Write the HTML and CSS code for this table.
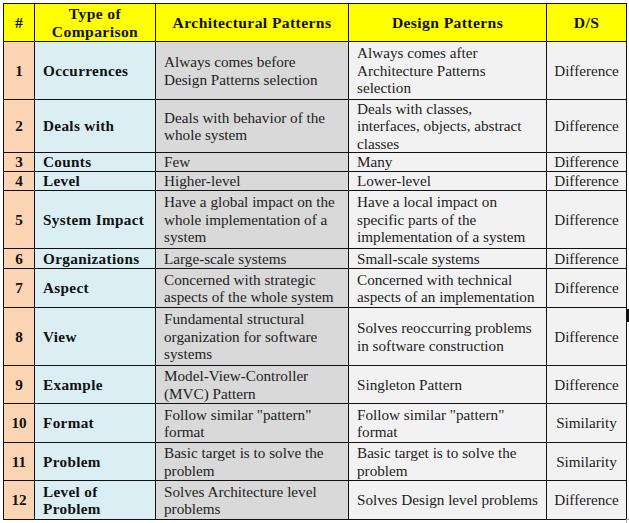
FILE: index.html
```html
<!DOCTYPE html>
<html>
<head>
<meta charset="utf-8">
<link rel="stylesheet" href="styles.css">
</head>
<body>
<div class="page">
<div class="grid">
  <div class="c h">#</div><div class="c h">Type of<br>Comparison</div><div class="c h">Architectural Patterns</div><div class="c h">Design Patterns</div><div class="c h">D/S</div>

  <div class="c n">1</div><div class="c t">Occurrences</div><div class="c a">Always comes before<br>Design Patterns selection</div><div class="c d">Always comes after<br>Architecture Patterns<br>selection</div><div class="c s">Difference</div>

  <div class="c n">2</div><div class="c t">Deals with</div><div class="c a">Deals with behavior of the<br>whole system</div><div class="c d">Deals with classes,<br>interfaces, objects, abstract<br>classes</div><div class="c s">Difference</div>

  <div class="c n">3</div><div class="c t">Counts</div><div class="c a">Few</div><div class="c d">Many</div><div class="c s">Difference</div>

  <div class="c n">4</div><div class="c t">Level</div><div class="c a">Higher-level</div><div class="c d">Lower-level</div><div class="c s">Difference</div>

  <div class="c n">5</div><div class="c t">System Impact</div><div class="c a">Have a global impact on the<br>whole implementation of a<br>system</div><div class="c d">Have a local impact on<br>specific parts of the<br>implementation of a system</div><div class="c s">Difference</div>

  <div class="c n">6</div><div class="c t">Organizations</div><div class="c a">Large-scale systems</div><div class="c d">Small-scale systems</div><div class="c s">Difference</div>

  <div class="c n">7</div><div class="c t">Aspect</div><div class="c a">Concerned with strategic<br>aspects of the whole system</div><div class="c d">Concerned with technical<br>aspects of an implementation</div><div class="c s">Difference</div>

  <div class="c n">8</div><div class="c t">View</div><div class="c a">Fundamental structural<br>organization for software<br>systems</div><div class="c d">Solves reoccurring problems<br>in software construction</div><div class="c s">Difference</div>

  <div class="c n">9</div><div class="c t">Example</div><div class="c a">Model-View-Controller<br>(MVC) Pattern</div><div class="c d">Singleton Pattern</div><div class="c s">Difference</div>

  <div class="c n">10</div><div class="c t">Format</div><div class="c a">Follow similar "pattern"<br>format</div><div class="c d">Follow similar "pattern"<br>format</div><div class="c s">Similarity</div>

  <div class="c n">11</div><div class="c t">Problem</div><div class="c a">Basic target is to solve the<br>problem</div><div class="c d">Basic target is to solve the<br>problem</div><div class="c s">Similarity</div>

  <div class="c n">12</div><div class="c t">Level of<br>Problem</div><div class="c a">Solves Architecture level<br>problems</div><div class="c d">Solves Design level problems</div><div class="c s">Difference</div>
</div>
<div class="mark"></div>
<div class="corner"></div>
</div>
</body>
</html>
```

FILE: styles.css
```css
html, body {
  margin: 0;
  padding: 0;
  background: #ffffff;
}

.page {
  position: relative;
  width: 629px;
  height: 523px;
  overflow: hidden;
}

.grid {
  margin: 3px 0 0 3px;
  display: grid;
  grid-template-columns: 31px 121px 193px 198px 80px;
  grid-template-rows: 38px 58px 53px 19px 19px 58px 20px 39px 58px 38px 39px 38px 39px;
  width: 623px;
  border-left: 1px solid #111;
  border-top: 1px solid #111;
  font-family: "Liberation Serif", "Times New Roman", serif;
  font-size: 15.2px;
  line-height: 17.5px;
  color: #222;
}

.c {
  box-sizing: border-box;
  border-right: 1px solid #111;
  border-bottom: 1px solid #111;
  display: flex;
  flex-direction: column;
  justify-content: center;
  padding: 0 0 0 8px;
  white-space: nowrap;
  overflow: hidden;
}

.h {
  background: #ffff00;
  font-weight: bold;
  font-size: 15.6px;
  letter-spacing: 0.4px;
  text-align: center;
  align-items: center;
  padding: 0;
  color: #111;
}

.n {
  background: #fbd4b4;
  font-weight: bold;
  align-items: center;
  padding: 0;
  color: #111;
}

.t {
  background: #daeef3;
  font-weight: bold;
  letter-spacing: 0.35px;
  color: #111;
}

.a {
  background: #d9d9d9;
}

.d {
  background: #f2f2f2;
}

.s {
  background: #f2f2f2;
  align-items: center;
  padding: 0;
}

.mark {
  position: absolute;
  left: 627px;
  top: 309px;
  width: 2px;
  height: 13px;
  background: #111;
}

.corner {
  position: absolute;
  left: 626px;
  top: 519px;
  width: 3px;
  height: 4px;
  border-left: 1px solid #aaa;
  border-top: 1px solid #aaa;
}
```
